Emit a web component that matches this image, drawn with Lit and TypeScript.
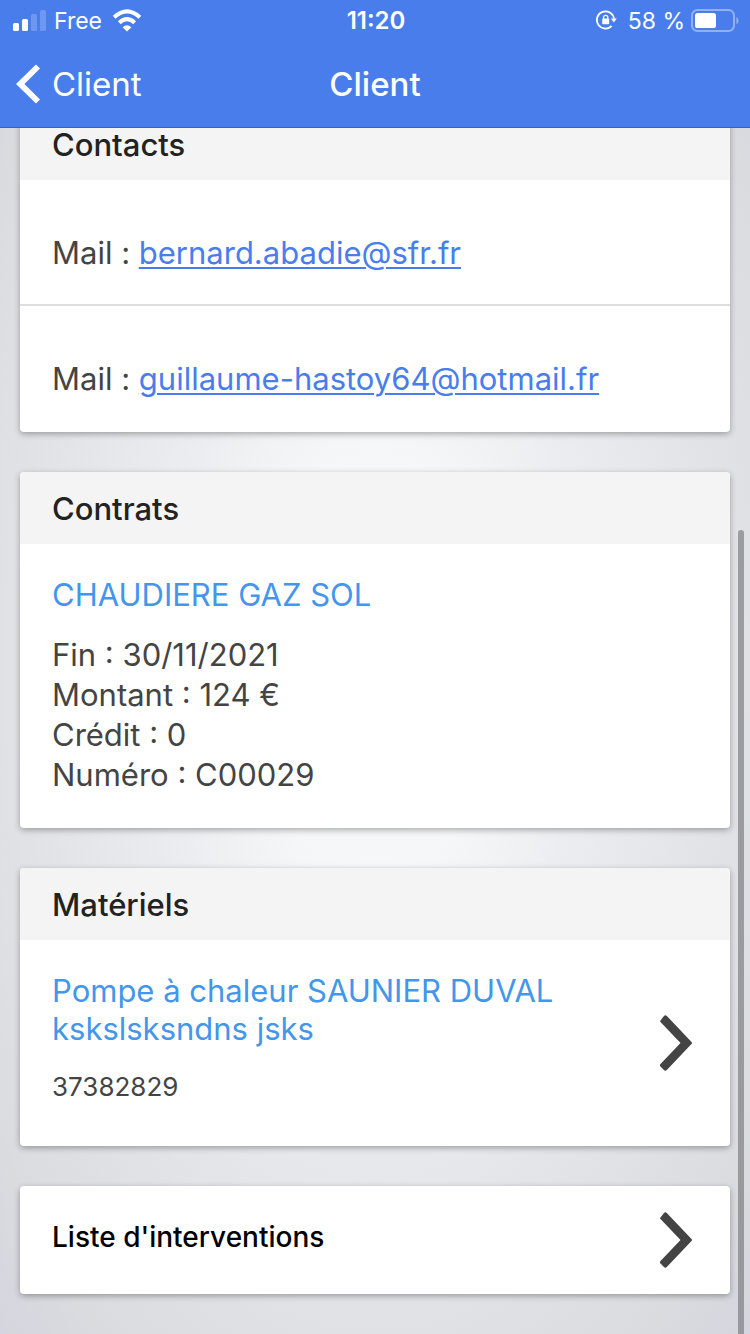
import { LitElement, html, css, svg } from "lit";
import { customElement } from "lit/decorators.js";

const chevron = html`
  <svg class="chevron" viewBox="0 0 32 56" aria-hidden="true">
    <path
      d="M0.5 5.4 L4 0.9 Q5.3 -0.6 6.8 0.9 L31.5 26.9 Q32.5 28 31.5 29.1 L6.8 55.1 Q5.3 56.6 3.9 55.1 L0.5 51.6 Q-0.6 50.3 0.5 49 L20.5 28 L0.5 7 Q-0.3 6.2 0.5 5.4 Z"
    />
  </svg>
`;

const signalBars = [
  { x: 0, h: 8, on: true },
  { x: 9, h: 12, on: true },
  { x: 18, h: 17, on: false },
  { x: 27, h: 21, on: false },
];

@customElement("status-bar")
export class StatusBar extends LitElement {
  static styles = css`
    :host {
      display: grid;
      grid-template-columns: 1fr auto 1fr;
      align-items: center;
      height: 40px;
      padding: 0 11px 0 13px;
      font-size: 23px;
      line-height: 28px;
      color: #fff;
    }
    .side {
      display: flex;
      align-items: center;
    }
    .end {
      justify-content: flex-end;
    }
    .time {
      font-size: 24px;
      font-weight: 600;
    }
    .text {
      padding-top: 2px;
    }
    .signal {
      width: 33px;
      height: 21px;
      margin-right: 8px;
    }
    .wifi {
      width: 30px;
      height: 23px;
      margin-left: 10px;
    }
    .lock {
      width: 21px;
      height: 20px;
      margin-right: 11px;
    }
    .battery {
      width: 48px;
      height: 23px;
      margin-left: 6px;
    }
    svg {
      display: block;
      fill: #fff;
    }
  `;

  render() {
    return html`
      <div class="side">
        <svg class="signal" viewBox="0 0 33 21" role="img" aria-label="Signal">
          ${signalBars.map(
            (b) => svg`<rect x=${b.x} y=${21 - b.h} width="6" height=${b.h} rx="1.5"
              fill-opacity=${b.on ? 1 : 0.2}></rect>`
          )}
        </svg>
        <span class="text">Free</span>
        <svg class="wifi" viewBox="0 0 30 23" role="img" aria-label="Wi-Fi">
          <path d="M15 22.4 L10.6 18.2 Q15 14.4 19.4 18.2 Z" />
          <path
            d="M2.1 8.2 Q15 -3.6 27.9 8.2 M7.3 13.7 Q15 6.7 22.7 13.7"
            fill="none"
            stroke="#fff"
            stroke-width="4"
          />
        </svg>
      </div>
      <span class="time text">11:20</span>
      <div class="side end">
        <svg class="lock" viewBox="0 0 21 20" role="img" aria-label="Rotation">
          <path
            d="M15.6 16 A8.6 8.6 0 1 1 18 8.6"
            fill="none"
            stroke="#fff"
            stroke-width="1.8"
          />
          <path d="M14.8 8.6 H20.8 L17.8 12.6 Z" />
          <rect x="6.2" y="8.6" width="7" height="5.6" rx="0.8" />
          <path
            d="M7.6 9 V7.4 A2.1 2.1 0 0 1 11.8 7.4 V9"
            fill="none"
            stroke="#fff"
            stroke-width="1.3"
          />
        </svg>
        <span class="text">58 %</span>
        <svg class="battery" viewBox="0 0 48 23" role="img" aria-label="Batterie">
          <rect
            x="1"
            y="1"
            width="42"
            height="21"
            rx="5.5"
            fill="none"
            stroke="#fff"
            stroke-opacity="0.4"
            stroke-width="2"
          />
          <path d="M45.4 8 Q47.6 9 47.6 11.5 Q47.6 14 45.4 15 Z" fill-opacity="0.4" />
          <rect x="4" y="4" width="21" height="15" rx="2.6" />
        </svg>
      </div>
    `;
  }
}

@customElement("app-root")
export class AppRoot extends LitElement {
  static styles = css`
    :host {
      display: flex;
      flex-direction: column;
      height: 100vh;
      overflow: hidden;
      font-family: Inter, "Liberation Sans", sans-serif;
      font-size: 31px;
      line-height: 40px;
      color: #444;
      background: radial-gradient(
        ellipse farthest-corner at center,
        #fafafa 0%,
        #f6f7f8 22%,
        #ecedf0 40%,
        #e7e8eb 53%,
        #e0e1e5 71%,
        #dadbdf 88%,
        #d4d5de 100%
      );
    }
    * {
      box-sizing: border-box;
    }
    .top {
      flex: none;
      background: #4a7dec;
      border-bottom: 1px solid #315fd9;
      color: #fff;
    }
    .toolbar {
      display: grid;
      grid-template-columns: 1fr auto 1fr;
      align-items: center;
      height: 87px;
      padding: 0 16px;
    }
    .back {
      display: flex;
      align-items: center;
      justify-self: start;
      gap: 12px;
      padding: 0;
      border: 0;
      background: none;
      font: inherit;
      font-size: 33px;
      color: inherit;
    }
    .arrow {
      display: block;
      width: 24px;
      height: 40px;
      fill: #fff;
    }
    .title {
      margin: 0;
      font-size: 33px;
      line-height: 40px;
      font-weight: 500;
    }
    .body {
      position: relative;
      flex: 1;
      min-height: 0;
    }
    .content {
      display: flex;
      flex-direction: column;
      gap: 40px;
      height: 100%;
      padding: 0 20px 40px;
      overflow-x: hidden;
      overflow-y: auto;
      scrollbar-width: none;
    }
    .thumb {
      position: absolute;
      top: 402px;
      right: 6px;
      bottom: -3px;
      width: 6px;
      border-radius: 3px;
      background: rgba(110, 110, 114, 0.6);
    }
    .card {
      flex: none;
      border-radius: 4px;
      background: #fff;
      box-shadow: 0 2px 6px rgba(0, 0, 0, 0.32);
      overflow: hidden;
    }
    .scrolled {
      margin-top: -20px;
    }
    .head {
      margin: 0;
      padding: 21px 32px 19px;
      background: #f4f4f4;
      font-size: 31px;
      line-height: 32px;
      font-weight: 500;
      color: #222;
    }
    .contact {
      height: 126px;
      padding: 53px 32px 0;
    }
    .divided {
      border-bottom: 2px solid #dedede;
    }
    .mail {
      color: #4a7dec;
      text-decoration-thickness: 2px;
      text-underline-offset: 3px;
    }
    .details {
      padding: 32px 32px 33px;
    }
    .name {
      margin: 0;
      font-size: 31px;
      line-height: 38px;
      font-weight: 400;
      color: #4396ea;
    }
    .facts {
      margin: 21px 0 0;
      padding: 0;
      list-style: none;
    }
    .row {
      display: flex;
      align-items: center;
      justify-content: space-between;
      width: 100%;
      padding: 0 38px 0 32px;
      color: inherit;
      text-decoration: none;
    }
    .device {
      padding: 32px 0 41px;
    }
    .reference {
      margin: 21px 0 0;
      font-size: 26px;
      line-height: 36px;
    }
    .link {
      font-size: 28px;
      font-weight: 500;
      color: #000;
    }
    .label {
      padding: 31px 0 37px;
    }
    .chevron {
      display: block;
      flex: none;
      width: 32px;
      height: 56px;
      fill: #444;
    }
  `;

  private mails = ["bernard.abadie@sfr.fr", "guillaume-hastoy64@hotmail.fr"];
  private facts = ["Fin : 30/11/2021", "Montant : 124 €", "Crédit : 0", "Numéro : C00029"];

  render() {
    return html`
      <header class="top">
        <status-bar></status-bar>
        <nav class="toolbar">
          <button class="back" type="button">
            <svg class="arrow" viewBox="0 0 24 40" aria-hidden="true">
              <path d="M0 20 L20 0.4 L24 4.4 L8.4 20 L24 35.6 L20 39.6 Z" />
            </svg>
            <span>Client</span>
          </button>
          <h1 class="title">Client</h1>
        </nav>
      </header>
      <div class="body">
        <main class="content">
          <section class="card scrolled">
            <h2 class="head">Contacts</h2>
            ${this.mails.map(
              (mail, i) => html`
                <div class="contact ${i < this.mails.length - 1 ? "divided" : ""}">
                  Mail : <a class="mail" href="mailto:${mail}">${mail}</a>
                </div>
              `
            )}
          </section>
          <section class="card">
            <h2 class="head">Contrats</h2>
            <div class="details">
              <h3 class="name">CHAUDIERE GAZ SOL</h3>
              <ul class="facts">
                ${this.facts.map((fact) => html`<li>${fact}</li>`)}
              </ul>
            </div>
          </section>
          <section class="card">
            <h2 class="head">Matériels</h2>
            <a class="row" href="#materiel">
              <div class="device">
                <h3 class="name">Pompe à chaleur SAUNIER DUVAL<br />kskslsksndns jsks</h3>
                <p class="reference">37382829</p>
              </div>
              ${chevron}
            </a>
          </section>
          <section class="card">
            <a class="row link" href="#interventions">
              <span class="label">Liste d'interventions</span>
              ${chevron}
            </a>
          </section>
        </main>
        <div class="thumb"></div>
      </div>
    `;
  }
}
